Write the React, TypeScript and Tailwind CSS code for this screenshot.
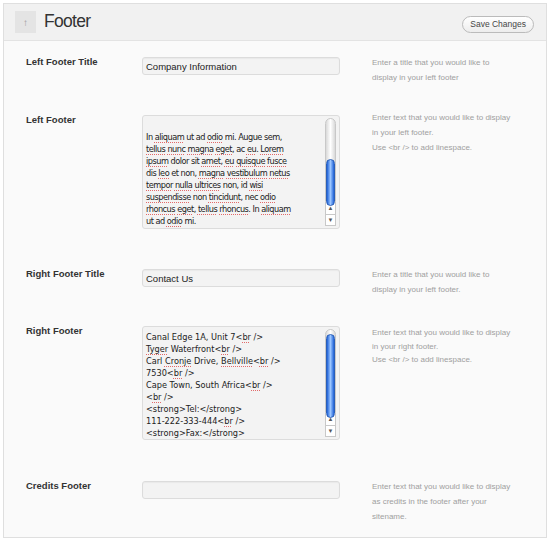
import React from 'react';

const sans = "font-['Liberation_Sans',Arial,sans-serif]";

type Seg = string | { w: string };

const Text: React.FC<{ lines: Seg[][] }> = ({ lines }) => (
  <>
    {lines.map((line, i) => (
      <div key={i} className="h-[12px] whitespace-pre">
        {line.length === 0 ? '\u00a0' : line.map((s, j) =>
          typeof s === 'string' ? (
            <span key={j}>{s}</span>
          ) : (
            <span key={j} className="underline decoration-dotted decoration-[#e26a6a] underline-offset-[2px]">{s.w}</span>
          )
        )}
      </div>
    ))}
  </>
);

const Scrollbar: React.FC<{ thumbTop: number; thumbHeight: number }> = ({ thumbTop, thumbHeight }) => (
  <div className="absolute right-[3px] top-[2px] bottom-[2px] w-[11px] flex flex-col">
    <div className="relative flex-1 rounded-t-full bg-gradient-to-r from-[#d9d9d9] via-white to-[#d9d9d9] border border-[#c8c8c8]">
      <div
        className="absolute left-[0px] right-[0px] rounded-full bg-gradient-to-r from-[#1c5fd6] via-[#9cc6ff] to-[#1c5fd6] border border-[#2a5fb8]"
        style={{ top: thumbTop, height: thumbHeight }}
      />
    </div>
    <div className="h-[12px] flex items-center justify-center border-x border-[#c8c8c8] bg-white text-[6px] text-[#555] leading-none">▲</div>
    <div className="h-[12px] flex items-center justify-center border border-[#c8c8c8] bg-white text-[6px] text-[#555] leading-none">▼</div>
  </div>
);

const Row: React.FC<{ label: string; h: string; helpClass?: string; help: string[]; children: React.ReactNode }> = ({
  label,
  h,
  helpClass = '-mt-[2px] leading-[15px]',
  help,
  children,
}) => (
  <div className={`flex items-start ${h}`}>
    <div className="w-[117px] pl-[22px] -mt-[1px] text-[9.5px] font-bold text-[#333] leading-[12px]">{label}</div>
    <div className="w-[198px] ml-[21px]">{children}</div>
    <div className={`ml-[32px] w-[140px] ${helpClass} text-[8px] text-[#a0a0a0]`}>
      {help.map((l, i) => (
        <div key={i}>{l}</div>
      ))}
    </div>
  </div>
);

const Input: React.FC<{ value: string }> = ({ value }) => (
  <div className="h-[18px] rounded-[3px] border border-[#dcdcdc] bg-[#f3f3f3] shadow-[inset_0_1px_1px_rgba(0,0,0,0.04)] px-[3px] text-[9.5px] leading-[17px] text-[#222]">
    {value}
  </div>
);

const TextArea: React.FC<{ lines: Seg[][]; textClass: string; thumbTop: number; thumbHeight: number }> = ({
  lines,
  textClass,
  thumbTop,
  thumbHeight,
}) => (
  <div className="relative h-[114px] rounded-[3px] border border-[#dcdcdc] bg-[#f3f3f3] overflow-hidden">
    <div className={`pl-[3px] ${textClass} font-['DejaVu_Sans',Verdana,sans-serif] text-[8.2px] leading-[12px] text-[#222]`}>
      <Text lines={lines} />
    </div>
    <Scrollbar thumbTop={thumbTop} thumbHeight={thumbHeight} />
  </div>
);

const leftText: Seg[][] = [
  [],
  ['In ', { w: 'aliquam' }, ' ut ad ', { w: 'odio' }, ' mi. Augue sem,'],
  [{ w: 'tellus' }, ' ', { w: 'nunc' }, ' ', { w: 'magna' }, ' ', { w: 'eget' }, ', ac ', { w: 'eu' }, '. ', { w: 'Lorem' }],
  [{ w: 'ipsum' }, ' dolor sit ', { w: 'amet' }, ', ', { w: 'eu' }, ' ', { w: 'quisque' }, ' ', { w: 'fusce' }],
  ['dis ', { w: 'leo' }, ' et non, ', { w: 'magna' }, ' ', { w: 'vestibulum' }, ' ', { w: 'netus' }],
  [{ w: 'tempor' }, ' ', { w: 'nulla' }, ' ', { w: 'ultrices' }, ' non, id ', { w: 'wisi' }],
  [{ w: 'suspendisse' }, ' non ', { w: 'tincidunt' }, ', nec ', { w: 'odio' }],
  [{ w: 'rhoncus' }, ' ', { w: 'eget' }, ', ', { w: 'tellus' }, ' ', { w: 'rhoncus' }, '. In ', { w: 'aliquam' }],
  ['ut ad ', { w: 'odio' }, ' mi.'],
];

const rightText: Seg[][] = [
  ['Canal Edge 1A, Unit 7<', { w: 'br' }, ' />'],
  [{ w: 'Tyger' }, ' Waterfront<', { w: 'br' }, ' />'],
  ['Carl ', { w: 'Cronje' }, ' Drive, ', { w: 'Bellville' }, '<', { w: 'br' }, ' />'],
  ['7530<', { w: 'br' }, ' />'],
  ['Cape Town, South Africa<', { w: 'br' }, ' />'],
  ['<', { w: 'br' }, ' />'],
  ['<strong>Tel:</strong>'],
  ['111-222-333-444<', { w: 'br' }, ' />'],
  ['<strong>Fax:</strong>'],
];

export default function App() {
  return (
    <div className={`w-[550px] h-[541px] bg-white pt-[3px] px-[3px] ${sans}`}>
      <div className="h-[535px] border border-[#dfdfdf] bg-[#fafafa] flex flex-col">
        {/* Header */}
        <div className="h-[37px] shrink-0 bg-[#f1f1f1] border-b border-[#e3e3e3] flex items-center pl-[11px] pr-[11px]">
          <div className="w-[21px] h-[22px] bg-[#e4e4e4] flex items-center justify-center text-[10px] text-[#999]">↑</div>
          <div className="ml-[8px] text-[17.5px] tracking-[-0.7px] text-[#333] leading-none">Footer</div>
          <button className="ml-auto mt-[4px] mr-[1px] h-[17px] px-[7px] rounded-full border border-[#bbb] bg-gradient-to-b from-white to-[#ededed] text-[8.5px] text-[#464646] leading-none">
            Save Changes
          </button>
        </div>

        {/* Body */}
        <div className="pt-[16px] flex flex-col">
          <Row label="Left Footer Title" h="h-[58px]" help={['Enter a title that you would like to', 'display in your left footer']}>
            <Input value="Company Information" />
          </Row>
          <Row
            label="Left Footer"
            h="h-[154px]"
            helpClass="-mt-[5px] leading-[15px]"
            help={['Enter text that you would like to display', 'in your left footer.', 'Use <br /> to add linespace.']}
          >
            <TextArea lines={leftText} textClass="pt-[3px] tracking-[-0.5px]" thumbTop={40} thumbHeight={47} />
          </Row>
          <Row label="Right Footer Title" h="h-[57px]" help={['Enter a title that you would like to', 'display in your left footer.']}>
            <Input value="Contact Us" />
          </Row>
          <Row
            label="Right Footer"
            h="h-[155px]"
            helpClass="mt-[0px] leading-[13.5px]"
            help={['Enter text that you would like to display', 'in your right footer.', 'Use <br /> to add linespace.']}
          >
            <TextArea lines={rightText} textClass="pt-[4px]" thumbTop={4} thumbHeight={84} />
          </Row>
          <Row
            label="Credits Footer"
            h="h-[55px]"
            help={['Enter text that you would like to display', 'as credits in the footer after your', 'sitename.']}
          >
            <Input value="" />
          </Row>
        </div>
      </div>
    </div>
  );
}
